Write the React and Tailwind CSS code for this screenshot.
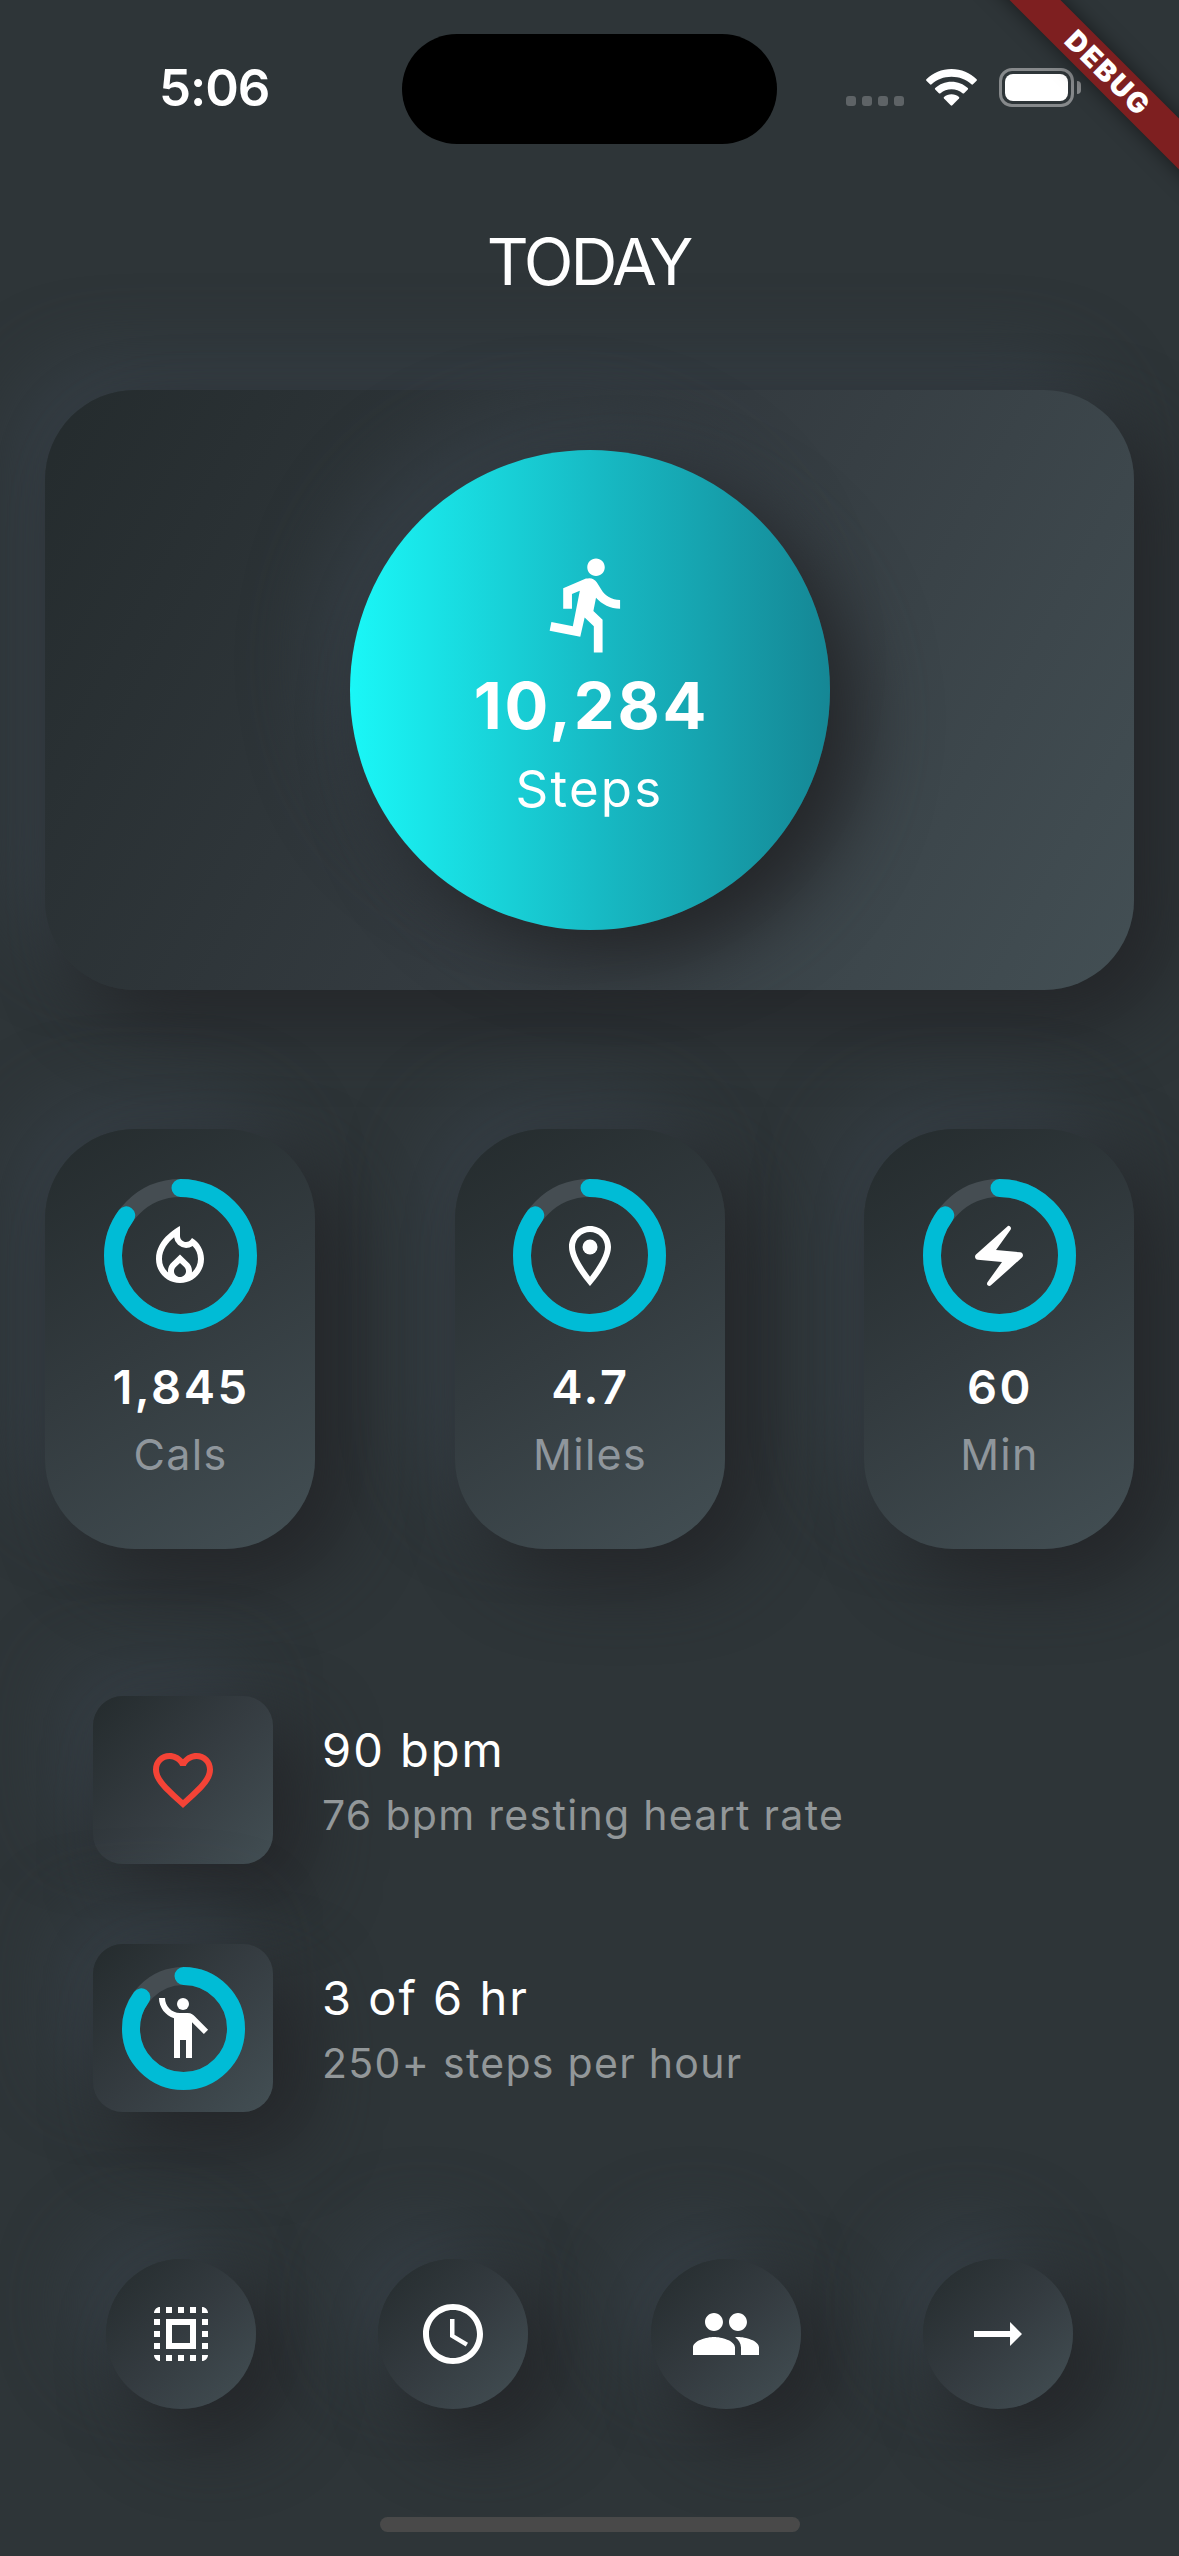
import {
  MdAccessTime,
  MdArrowRightAlt,
  MdDirectionsRun,
  MdElectricBolt,
  MdEmojiPeople,
  MdFavoriteBorder,
  MdOutlineLocalFireDepartment,
  MdOutlineLocationOn,
  MdPeople,
  MdSelectAll,
} from "react-icons/md";

const RAISED =
  "shadow-[30px_30px_72px_0px_#242629,-30px_-30px_72px_0px_#363f46]";

function StatusBar() {
  return (
    <div className="relative flex h-[177px] w-full shrink-0">
      <div className="mt-[58px] ml-[159px] h-[60px] w-[243px] text-[51px] leading-[60px] font-semibold tracking-[-1.1px]">
        5:06
      </div>
      <div className="mt-[34px] h-[110px] w-[375px] rounded-full bg-black" />
      <div className="mt-[96px] ml-[69px] flex h-[10px] gap-[6px]">
        {[0, 1, 2, 3].map((dot) => (
          <div key={dot} className="size-[10px] rounded-[3px] bg-[#5e6366]" />
        ))}
      </div>
      <svg
        className="mt-[69px] ml-[22px] h-[37px] w-[51px]"
        viewBox="0 0 51 37"
        fill="#fff"
      >
        <path d="M25.5 0C35.3 0 44.200 3.800 50.600 10.200Q51.300 11 50.600 11.700L47 15.300Q46.200 16 45.400 15.300C40.100 10.400 33.200 7.700 25.500 7.700S10.900 10.400 5.600 15.300Q4.800 16 4 15.300L0.400 11.700Q-0.300 11 0.400 10.200C6.800 3.800 15.700 0 25.500 0Z" />
        <path d="M25.500 12.700C31.800 12.700 37.500 15 41.800 19Q42.500 19.800 41.800 20.500L38.100 24.200Q37.300 24.900 36.500 24.200C33.500 21.600 29.700 20.200 25.500 20.200S17.500 21.600 14.500 24.200Q13.700 24.900 12.900 24.200L9.200 20.500Q8.500 19.800 9.200 19C13.500 15 19.200 12.700 25.500 12.700Z" />
        <path d="M25.500 25.300C28.400 25.300 31 26.300 33 27.900Q33.700 28.600 33 29.400L26.300 36.300Q25.500 37 24.700 36.300L18 29.400Q17.300 28.600 18 27.900C20 26.300 22.600 25.300 25.500 25.300Z" />
      </svg>
      <div className="mt-[68px] ml-[22px] h-[39px] w-[75px] rounded-[13px] border-[3px] border-[#86898b] p-[3px]">
        <div className="size-full rounded-[8px] bg-white" />
      </div>
      <div className="mt-[81px] ml-[3px] h-[13px] w-[4px] rounded-r-full bg-[#86898b]" />
      <div className="absolute top-0 right-0 size-[260px] overflow-hidden">
        <div className="absolute top-[54px] left-[-12px] h-[36px] w-[400px] rotate-45 bg-[#7e1f20] pl-[3px] text-center text-[28px] leading-[36px] font-black tracking-[2px] shadow-[0_0_20px_rgba(0,0,0,0.5)]">
          DEBUG
        </div>
      </div>
    </div>
  );
}

function Ring({ size, children }) {
  const radius = (size - 18) / 2;
  const length = 2 * Math.PI * radius;
  return (
    <div
      className="relative flex shrink-0 items-center justify-center"
      style={{ width: size, height: size }}
    >
      <svg
        className="absolute inset-0 size-full -rotate-90"
        viewBox={`0 0 ${size} ${size}`}
        fill="none"
        strokeWidth="18"
      >
        <circle cx={size / 2} cy={size / 2} r={radius} stroke="#454d52" />
        <circle
          cx={size / 2}
          cy={size / 2}
          r={radius}
          stroke="#00bcd6"
          strokeLinecap="round"
          strokeDasharray={`${length * 0.85} ${length}`}
        />
      </svg>
      {children}
    </div>
  );
}

const STATS = [
  { value: "1,845", label: "Cals", Icon: MdOutlineLocalFireDepartment },
  { value: "4.7", label: "Miles", Icon: MdOutlineLocationOn },
  { value: "60", label: "Min", Icon: MdElectricBolt },
];

function StatCard({ value, label, Icon }) {
  return (
    <div
      className={`flex h-[420px] w-[270px] flex-col items-center rounded-[90px] bg-[linear-gradient(147.3deg,#242b2d,#333b3f_48%,#434f54)] pt-[50px] ${RAISED}`}
    >
      <Ring size={153}>
        <Icon className="relative size-[72px]" />
      </Ring>
      <div className="mt-[27px] pl-[2px] text-[47px] leading-[56px] font-semibold tracking-[2.5px]">
        {value}
      </div>
      <div className="mt-[13px] pl-[1px] text-[43px] leading-[52px] font-normal tracking-[1.3px] text-[#8f969c]">
        {label}
      </div>
    </div>
  );
}

function DetailRow({ title, subtitle, children }) {
  return (
    <div className="flex h-[168px] items-center">
      <div
        className={`flex h-[168px] w-[180px] items-center justify-center rounded-[30px] bg-[linear-gradient(133deg,#242b2d,#353c41_50%,#434f54)] ${RAISED}`}
      >
        {children}
      </div>
      <div className="mt-[4px] ml-[49px]">
        <div className="text-[47px] leading-[58px] font-normal tracking-[2px]">
          {title}
        </div>
        <div className="mt-[7px] text-[41px] leading-[58px] font-normal tracking-[1.3px] text-[#929799]">
          {subtitle}
        </div>
      </div>
    </div>
  );
}

const ACTIONS = [MdSelectAll, MdAccessTime, MdPeople, MdArrowRightAlt];

export default function App() {
  return (
    <div className="flex h-[2556px] w-[1179px] flex-col overflow-hidden bg-[#2e3538] font-['Inter','Liberation_Sans',sans-serif] text-white">
      <StatusBar />
      <h1 className="mt-[45px] pr-[2px] text-center text-[65px] leading-[80px] font-normal tracking-[-3px]">
        TODAY
      </h1>

      <div
        className={`mx-[45px] mt-[88px] flex h-[600px] shrink-0 items-center justify-center rounded-[90px] bg-[linear-gradient(118.85deg,#242b2d,#343b40_50%,#434f54)] ${RAISED}`}
      >
        <div
          className={`flex size-[480px] flex-col items-center rounded-full bg-[linear-gradient(90deg,#1af7f7,#17bcc6_50%,#158795)] pt-[102px] ${RAISED}`}
        >
          <MdDirectionsRun className="size-[105px]" />
          <div className="mt-[10px] pl-[4px] text-[65px] leading-[78px] font-bold tracking-[2.8px]">
            10,284
          </div>
          <div className="mt-[14px] text-[51px] leading-[60px] font-normal tracking-[2.2px]">
            Steps
          </div>
        </div>
      </div>

      <div className="mx-[45px] mt-[139px] flex shrink-0 justify-between">
        {STATS.map((stat) => (
          <StatCard key={stat.label} {...stat} />
        ))}
      </div>

      <div className="mt-[147px] ml-[93px] flex shrink-0 flex-col gap-[80px]">
        <DetailRow title="90 bpm" subtitle="76 bpm resting heart rate">
          <MdFavoriteBorder className="size-[72px] text-[#f44336]" />
        </DetailRow>
        <DetailRow title="3 of 6 hr" subtitle="250+ steps per hour">
          <Ring size={123}>
            <MdEmojiPeople className="relative size-[72px]" />
          </Ring>
        </DetailRow>
      </div>

      <div className="mx-[45px] mt-[147px] flex shrink-0 justify-around">
        {ACTIONS.map((Icon, index) => (
          <div
            key={index}
            className={`flex size-[150px] items-center justify-center rounded-full bg-[linear-gradient(135deg,#242b2d,#343b40_50%,#434f54)] ${RAISED}`}
          >
            <Icon className="size-[72px]" />
          </div>
        ))}
      </div>

      <div className="mx-auto mt-[108px] h-[15px] w-[420px] shrink-0 rounded-full bg-[#494949]" />
    </div>
  );
}
